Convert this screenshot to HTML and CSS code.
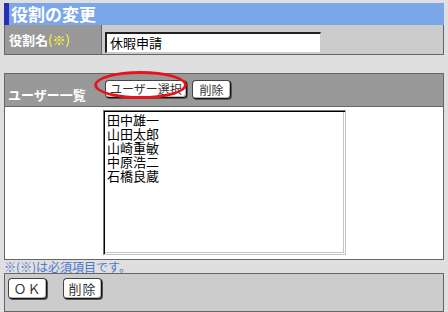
FILE: index.html
```html
<!DOCTYPE html>
<html lang="ja">
<head>
<meta charset="utf-8">
<title>役割の変更</title>
<link rel="stylesheet" href="styles.css">
</head>
<body>
<div class="title">役割の変更</div>
<div class="row1">
  <div class="label">役割名<span class="req">(※)</span></div>
  <div class="value"><input class="text" type="text" value="休暇申請"></div>
</div>

<div class="panel">
  <div class="phead">
    <div class="plabel">ユーザー一覧</div>
    <div class="pbtns">
      <button class="btn sel">ユーザー選択</button>
      <button class="btn del">削除</button>
      <span class="ring"></span>
    </div>
  </div>
  <div class="pbody">
    <div class="list">
      <div>田中雄一</div>
      <div>山田太郎</div>
      <div>山崎重敏</div>
      <div>中原浩二</div>
      <div>石橋良蔵</div>
    </div>
  </div>
</div>
<div class="note">※(※)は必須項目です。</div>
<div class="bar">
  <button class="btn big">ＯＫ</button>
  <button class="btn big">削除</button>
</div>
</body>
</html>
```
FILE: styles.css
```css
html, body {
  margin: 0;
  padding: 0;
}
body {
  background: #e0dfdf;
  padding: 3px 4px 0 4px;
  font-family: "Noto Sans CJK JP", "Noto Sans", sans-serif;
  color: #000;
}
.title {
  height: 22px;
  line-height: 22px;
  background: #7ba7e8;
  border-left: 5px solid #2b2bb5;
  color: #fff;
  font-size: 17px;
  font-weight: bold;
  padding-left: 2px;
}
.row1 {
  display: grid;
  grid-template-columns: 97px 1fr;
  border: 1px solid #666;
  border-top: none;
  height: 29px;
}
.label {
  background: #999;
  border-right: 1px solid #666;
  color: #fff;
  font-size: 13px;
  font-weight: bold;
  line-height: 29px;
  padding-left: 4px;
}
.req {
  color: #ffff33;
  font-weight: normal;
}
.value {
  background: #ccc;
  padding: 4px 0 0 3px;
}
.text {
  box-sizing: border-box;
  width: 216px;
  height: 21px;
  margin: 0;
  padding: 0 3px;
  border-style: solid;
  border-width: 2px 1px 1px 2px;
  border-color: #222 #ccc #ccc #222;
  background: #fff;
  font-family: inherit;
  font-size: 13px;
  line-height: 17px;
  color: #000;
}
.panel {
  margin-top: 18px;
  border: 1px solid #666;
}
.phead {
  display: grid;
  grid-template-columns: 97px 1fr;
  height: 32px;
  background: #999;
  border-bottom: 1px solid #666;
}
.plabel {
  color: #fff;
  font-size: 13px;
  font-weight: bold;
  align-self: end;
  line-height: 14px;
  padding: 0 0 4px 3px;
}
.pbtns {
  position: relative;
  display: flex;
  align-items: flex-start;
  gap: 5px;
  padding: 6px 0 0 3px;
}
.btn {
  box-sizing: border-box;
  margin: 0;
  padding: 0;
  background: #fff;
  border: 1px solid #444;
  border-right-color: #111;
  border-bottom-color: #111;
  border-radius: 4px;
  box-shadow: inset -1px -1px 0 #b8b8b8, 1px 1px 0 #555;
  font-family: inherit;
  font-size: 12px;
  color: #333;
  line-height: 14px;
}
.sel {
  width: 82px;
  height: 18px;
}
.del {
  width: 39px;
  height: 19px;
}
.ring {
  position: absolute;
  left: -8px;
  top: -3px;
  width: 93px;
  height: 28px;
  box-sizing: border-box;
  border: 3px solid #e8141a;
  border-radius: 50%;
}
.pbody {
  background: #fff;
  height: 152px;
  padding: 3px 0 0 98px;
  box-sizing: border-box;
}
.list {
  box-sizing: border-box;
  width: 243px;
  height: 145px;
  border: 1px solid;
  border-color: #777 #c4c4c4 #c4c4c4 #777;
  box-shadow: inset 1px 1px 0 #000, inset -1px -1px 0 #fff, inset -2px -2px 0 #c4c4c4;
  padding: 2px 0 0 3px;
  font-size: 13px;
  line-height: 14px;
}
.note {
  color: #4a78d0;
  font-size: 12px;
  line-height: 13px;
  height: 13px;
}
.bar {
  display: flex;
  gap: 16px;
  height: 33px;
  background: #ccc;
  border: 1px solid #666;
  padding: 4px 0 0 3px;
  box-sizing: content-box;
}
.bar .btn {
  width: 39px;
  height: 21px;
  font-size: 13px;
  letter-spacing: 1px;
}
```
